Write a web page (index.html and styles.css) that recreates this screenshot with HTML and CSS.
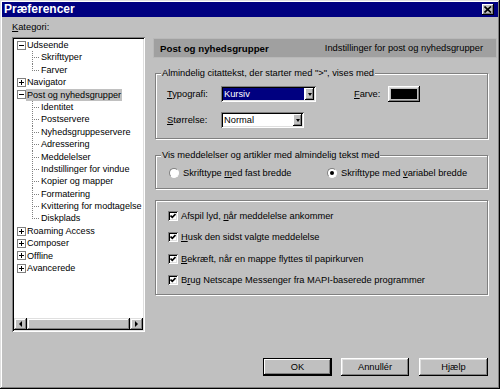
FILE: index.html
```html
<!DOCTYPE html>
<html>
<head>
<meta charset="utf-8">
<title>Præferencer</title>
<link rel="stylesheet" href="styles.css">
</head>
<body>
<div class="window">
	<div class="titlebar">
		<span class="title">Præferencer</span>
		<span class="close"><svg width="8" height="7" viewBox="0 0 8 7"><path d="M0.5 0.5 L7 6.5 M7 0.5 L0.5 6.5" stroke="#000" stroke-width="1.7" fill="none"/></svg></span>
	</div>

	<div class="main">
		<div class="left">
			<div class="cat-label"><u>K</u>ategori:</div>
			<div class="tree">
				<ul class="tree-list">
					<li>
						<div class="row"><span class="exp"></span><span class="lbl">Udseende</span></div>
						<ul class="children">
							<li><span class="lbl">Skrifttyper</span></li>
							<li><span class="lbl">Farver</span></li>
						</ul>
					</li>
					<li><div class="row"><span class="exp plus"></span><span class="lbl">Navigator</span></div></li>
					<li>
						<div class="row"><span class="exp"></span><span class="lbl sel">Post og nyhedsgrupper</span></div>
						<ul class="children">
							<li><span class="lbl">Identitet</span></li>
							<li><span class="lbl">Postservere</span></li>
							<li><span class="lbl">Nyhedsgruppeservere</span></li>
							<li><span class="lbl">Adressering</span></li>
							<li><span class="lbl">Meddelelser</span></li>
							<li><span class="lbl">Indstillinger for vindue</span></li>
							<li><span class="lbl">Kopier og mapper</span></li>
							<li><span class="lbl">Formatering</span></li>
							<li><span class="lbl">Kvittering for modtagelse</span></li>
							<li><span class="lbl">Diskplads</span></li>
						</ul>
					</li>
					<li><div class="row"><span class="exp plus"></span><span class="lbl">Roaming Access</span></div></li>
					<li><div class="row"><span class="exp plus"></span><span class="lbl">Composer</span></div></li>
					<li><div class="row"><span class="exp plus"></span><span class="lbl">Offline</span></div></li>
					<li><div class="row"><span class="exp plus"></span><span class="lbl">Avancerede</span></div></li>
				</ul>
				<div class="hscroll">
					<span class="sbtn"><i class="arr-left"></i></span>
					<span class="thumb"></span>
					<span class="sbtn"><i class="arr-right"></i></span>
				</div>
			</div>
		</div>

		<div class="right">
			<div class="header">
				<span class="header-title">Post og nyhedsgrupper</span>
				<span>Indstillinger for post og nyhedsgrupper</span>
			</div>

			<div class="group g1">
				<div class="legend">Almindelig citattekst, der starter med "&gt;", vises med</div>
				<div class="group-body">
					<div class="form-row">
						<span class="flabel"><u>T</u>ypografi:</span>
						<span class="select">
							<span class="value hl">Kursiv</span>
							<span class="drop"><i class="arr-down"></i></span>
						</span>
						<span class="farve-label"><u>F</u>arve:</span>
						<span class="swatch"><span></span></span>
					</div>
					<div class="form-row">
						<span class="flabel"><u>S</u>tørrelse:</span>
						<span class="select small">
							<span class="value">Normal</span>
							<span class="drop"><i class="arr-down"></i></span>
						</span>
					</div>
				</div>
			</div>

			<div class="group g2">
				<div class="legend">Vis meddelelser og artikler med almindelig tekst med</div>
				<div class="group-body">
					<label class="opt first"><span class="radio"></span><span>Skrifttype <u>m</u>ed fast bredde</span></label>
					<label class="opt"><span class="radio"><span class="dot"></span></span><span>Skrifttype med <u>v</u>ariabel bredde</span></label>
				</div>
			</div>

			<div class="group g3">
				<div class="group-body">
					<label class="chk"><span class="box"><svg width="6" height="6" viewBox="0 0 6 6"><path d="M0.5 2.5 L2.3 4.3 L5.5 1" stroke="#000" stroke-width="1.7" fill="none"/></svg></span><span>Afspil lyd, <u>n</u>år meddelelse ankommer</span></label>
					<label class="chk"><span class="box"><svg width="6" height="6" viewBox="0 0 6 6"><path d="M0.5 2.5 L2.3 4.3 L5.5 1" stroke="#000" stroke-width="1.7" fill="none"/></svg></span><span><u>H</u>usk den sidst valgte meddelelse</span></label>
					<label class="chk"><span class="box"><svg width="6" height="6" viewBox="0 0 6 6"><path d="M0.5 2.5 L2.3 4.3 L5.5 1" stroke="#000" stroke-width="1.7" fill="none"/></svg></span><span><u>B</u>ekræft, når en mappe flyttes til papirkurven</span></label>
					<label class="chk"><span class="box"><svg width="6" height="6" viewBox="0 0 6 6"><path d="M0.5 2.5 L2.3 4.3 L5.5 1" stroke="#000" stroke-width="1.7" fill="none"/></svg></span><span>B<u>r</u>ug Netscape Messenger fra MAPI-baserede programmer</span></label>
				</div>
			</div>
		</div>
	</div>

	<div class="footer">
		<span class="btn default">OK</span>
		<span class="btn w68">Annullér</span>
		<span class="btn">Hjælp</span>
	</div>
</div>
</body>
</html>
```

FILE: styles.css
```css
*{
	margin: 0;
	padding: 0;
	box-sizing: border-box;
}
body{
	font-family: "Liberation Sans", Arial, sans-serif;
	font-size: 9.3px;
	color: #000;
	background: #c0c0c0;
}
u{
	text-decoration: underline;
	text-underline-offset: 1px;
}

/* window frame */
.window{
	width: 500px;
	height: 389px;
	padding: 2px;
	display: flex;
	flex-direction: column;
	background: #c0c0c0;
	box-shadow: inset -1px -1px #000, inset 1px 1px #dfdfdf, inset -2px -2px #808080, inset 2px 2px #fff;
}
.titlebar{
	height: 15px;
	background: #000080;
	display: flex;
	align-items: center;
	justify-content: space-between;
}
.title{
	color: #fff;
	font-weight: bold;
	font-size: 12px;
	line-height: 15px;
	padding-left: 2px;
}
.close{
	width: 12px;
	height: 11px;
	margin-right: 4px;
	background: #c0c0c0;
	display: flex;
	align-items: center;
	justify-content: center;
	box-shadow: inset -1px -1px #000, inset 1px 1px #fff, inset -2px -2px #808080;
}
.close svg{ display: block; }

.main{
	flex: 1;
	display: flex;
}

/* left: tree */
.left{
	width: 133px;
	margin-left: 10px;
	padding-top: 4px;
	display: flex;
	flex-direction: column;
}
.cat-label{
	height: 13px;
	line-height: 13px;
}
.tree{
	margin-top: 3px;
	height: 295px;
	background: #fff;
	padding: 2px;
	display: flex;
	flex-direction: column;
	box-shadow: inset 1px 1px #808080, inset -1px -1px #fff, inset 2px 2px #000, inset -2px -2px #dfdfdf;
}
.tree-list{
	flex: 1;
	list-style: none;
	overflow: hidden;
	white-space: nowrap;
	font-size: 9.1px;
}
.tree-list ul{ list-style: none; }
.row{
	display: flex;
	align-items: center;
	height: 12.4px;
	padding-left: 3px;
}
.exp{
	position: relative;
	width: 9px;
	height: 9px;
	border: 1px solid #808080;
	background: #fff;
	flex: none;
}
.exp::before{
	content: "";
	position: absolute;
	left: 1px; top: 3px;
	width: 5px; height: 1px;
	background: #000;
}
.exp.plus::after{
	content: "";
	position: absolute;
	left: 3px; top: 1px;
	width: 1px; height: 5px;
	background: #000;
}
.lbl{
	padding: 0 1px;
	line-height: 12px;
}
.lbl.sel{ background: #c0c0c0; }
.children li{
	position: relative;
	height: 12.4px;
	line-height: 12.4px;
	padding-left: 26px;
}
.children li::before{
	content: "";
	position: absolute;
	left: 18px; top: 0;
	width: 1px; height: 100%;
	background: repeating-linear-gradient(to bottom, #808080 0 1px, transparent 1px 2px);
}
.children li:last-child::before{ height: 7px; }
.children li::after{
	content: "";
	position: absolute;
	left: 19px; top: 6px;
	width: 6px; height: 1px;
	background: repeating-linear-gradient(to right, transparent 0 1px, #808080 1px 2px);
}

.hscroll{
	height: 12px;
	display: flex;
	background: #c0c0c0;
}
.sbtn, .thumb{
	background: #c0c0c0;
	box-shadow: inset -1px -1px #000, inset 1px 1px #dfdfdf, inset -2px -2px #808080, inset 2px 2px #fff;
}
.sbtn{
	width: 13px;
	display: flex;
	align-items: center;
	justify-content: center;
}
.thumb{ flex: 1; }
.arr-left, .arr-right{
	width: 0; height: 0;
	border-top: 3px solid transparent;
	border-bottom: 3px solid transparent;
}
.arr-left{ border-right: 3px solid #000; }
.arr-right{ border-left: 3px solid #000; }

/* right panel */
.right{
	flex: 1;
	margin-left: 8px;
	padding-top: 21px;
}
.header{
	height: 20px;
	margin-right: 1px;
	padding: 0 14px 0 7px;
	background: #a0a0a0;
	display: flex;
	align-items: center;
	justify-content: space-between;
	box-shadow: inset 1px 1px #b8b8b8, inset -1px -1px #b8b8b8;
}
.header-title{
	font-weight: bold;
	font-size: 9.7px;
}

.group{
	margin-left: 2px;
	width: 333px;
	border: 1px solid #808080;
	box-shadow: inset 1px 1px #fff, 1px 1px #fff;
}
.legend{
	display: table;
	height: 12px;
	line-height: 12px;
	margin: -7px 0 0 5px;
	padding: 0 1px;
	background: #c0c0c0;
}
.g1{ margin-top: 15px; }
.g1 .group-body{ padding: 7px 0 10px 11px; }
.g2{ margin-top: 16px; }
.g2 .group-body{
	padding: 6px 0 9px 13px;
	display: flex;
}
.g3{ margin-top: 11px; }
.g3 .group-body{
	padding: 9px 0 8px 12px;
	display: flex;
	flex-direction: column;
	gap: 9.33px;
}

.form-row{
	display: flex;
	align-items: center;
	height: 16px;
}
.form-row + .form-row{ margin-top: 10px; }
.flabel{ width: 54px; }
.select{
	width: 95px;
	height: 16px;
	padding: 2px;
	background: #fff;
	display: flex;
	box-shadow: inset 1px 1px #808080, inset -1px -1px #fff, inset 2px 2px #000, inset -2px -2px #dfdfdf;
}
.select.small{ width: 83px; }
.value{
	flex: 1;
	line-height: 12px;
	padding-left: 1px;
	margin-right: 1px;
}
.value.hl{
	background: #000080;
	color: #fff;
}
.drop{
	width: 9px;
	background: #c0c0c0;
	display: flex;
	align-items: center;
	justify-content: center;
	box-shadow: inset -1px -1px #000, inset 1px 1px #fff, inset -2px -2px #808080;
}
.arr-down{
	width: 0; height: 0;
	border-left: 2.5px solid transparent;
	border-right: 2.5px solid transparent;
	border-top: 3px solid #000;
}
.farve-label{
	margin-left: 38px;
	width: 34px;
}
.swatch{
	width: 32px;
	height: 16px;
	padding: 3px;
	background: #c0c0c0;
	box-shadow: inset -1px -1px #000, inset 1px 1px #fff, inset -2px -2px #808080, inset 2px 2px #dfdfdf;
}
.swatch span{
	display: block;
	height: 100%;
	background: #000;
}

.opt{
	display: flex;
	align-items: center;
	height: 12px;
	gap: 4px;
}
.opt.first{ width: 158px; }
.radio{
	width: 10px;
	height: 10px;
	border-radius: 50%;
	border: 1px solid;
	border-color: #808080 #fff #fff #808080;
	background: #fff;
	display: flex;
	align-items: center;
	justify-content: center;
}
.dot{
	width: 4px;
	height: 4px;
	border-radius: 50%;
	background: #000;
}

.chk{
	display: flex;
	align-items: center;
	height: 12px;
	gap: 3px;
}
.box{
	width: 10px;
	height: 10px;
	background: #fff;
	display: flex;
	align-items: center;
	justify-content: center;
	box-shadow: inset 1px 1px #808080, inset -1px -1px #fff, inset 2px 2px #000, inset -2px -2px #dfdfdf;
}
.box svg{ display: block; }

/* buttons */
.footer{
	display: flex;
	justify-content: flex-end;
	padding: 0 10px 11px 0;
}
.btn{
	width: 69px;
	height: 18px;
	margin-left: 10px;
	display: flex;
	align-items: center;
	justify-content: center;
	background: #c0c0c0;
	box-shadow: inset -1px -1px #000, inset 1px 1px #fff, inset -2px -2px #808080, inset 2px 2px #dfdfdf;
}
.btn.w68{ width: 68px; margin-left: 9px; }
.btn.default{
	border: 1px solid #000;
	box-shadow: inset -1px -1px #000, inset 1px 1px #fff, inset -2px -2px #808080;
}
```
